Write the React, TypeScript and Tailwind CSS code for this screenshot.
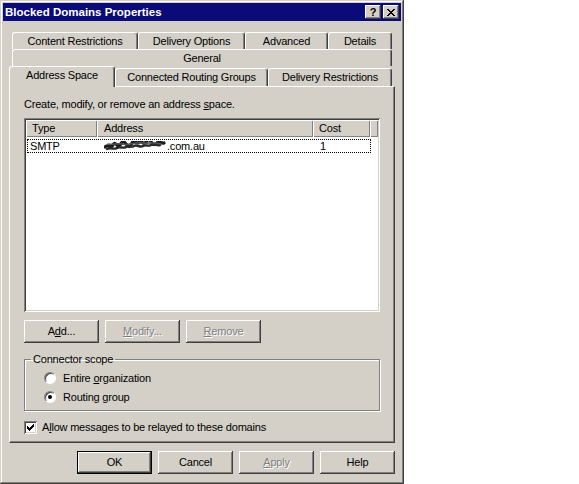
import React from 'react';

// Win2000-style "Blocked Domains Properties" dialog

const raised =
  'shadow-[inset_-1px_-1px_#404040,inset_1px_1px_#ffffff,inset_-2px_-2px_#808080,inset_2px_2px_#d4d0c8]';
const sunken =
  'shadow-[inset_1px_1px_#808080,inset_-1px_-1px_#ffffff,inset_2px_2px_#404040,inset_-2px_-2px_#d4d0c8]';
const disabledText = 'text-[#808080] [text-shadow:1px_1px_0_#ffffff]';

function Tab({ label, width, selected = false }: { label: string; width: string; selected?: boolean }) {
  return (
    <div
      className={`${width} ${
        selected ? 'h-[21px] relative z-10 pb-[3px]' : 'h-[18px] mb-[1px]'
      } flex items-center justify-center bg-[#d4d0c8] border-t border-l border-white border-r border-r-[#404040] rounded-t-[3px] shadow-[inset_-1px_0_#808080] whitespace-nowrap`}
    >
      {label}
    </div>
  );
}

function BackTab({ label, width }: { label: string; width: string }) {
  return (
    <div
      className={`${width} h-[17px] flex items-center justify-center border-t border-l border-white border-r border-r-[#404040] rounded-t-[3px] shadow-[inset_-1px_0_#808080] whitespace-nowrap`}
    >
      {label}
    </div>
  );
}

function Button({
  children,
  disabled = false,
  isDefault = false,
}: {
  children: React.ReactNode;
  disabled?: boolean;
  isDefault?: boolean;
}) {
  if (isDefault) {
    return (
      <div className="w-[75px] h-[23px] border border-black">
        <div className={`w-full h-full flex items-center justify-center ${raised}`}>{children}</div>
      </div>
    );
  }
  return (
    <div
      className={`w-[75px] h-[23px] flex items-center justify-center ${raised} ${disabled ? disabledText : ''}`}
    >
      {children}
    </div>
  );
}

function Radio({ checked, children }: { checked: boolean; children: React.ReactNode }) {
  return (
    <div className="flex items-center h-[14px] ml-[19px]">
      <div className="w-[12px] h-[12px] rounded-full bg-white border border-t-[#808080] border-l-[#808080] border-r-white border-b-white shadow-[inset_1px_1px_#404040] flex items-center justify-center">
        {checked && <div className="w-[4px] h-[4px] rounded-full bg-black" />}
      </div>
      <span className="ml-[7px]">{children}</span>
    </div>
  );
}

// the domain name is scribbled out in the original screenshot
function Scribble() {
  return (
    <svg width="63" height="11" viewBox="0 0 63 11" className="shrink-0">
      <path
        d="M1 6c3-4 5 3 8-2s4 4 7 0 3-5 6-1 4 3 6-1 5 2 7-1 4 4 7 0 4-2 6 1 4 1 6-1 3 2 6 1"
        fill="none"
        stroke="#1a1a1a"
        strokeWidth="3.2"
        strokeLinecap="round"
      />
      <path
        d="M3 8c4-2 7 1 10-1s6 1 9-1 5 1 8-1 6 2 9 0 5 1 8-1 5 1 9 0"
        fill="none"
        stroke="#2a2a2a"
        strokeWidth="2.4"
        strokeLinecap="round"
      />
      <path d="M4 3c5 1 9-1 14 0s9 0 14-1 8 1 13 0 8 0 12 1" fill="none" stroke="#555" strokeWidth="1.4" strokeLinecap="round" />
    </svg>
  );
}

export default function App() {
  return (
    <div className="w-[579px] h-[484px] bg-white text-black text-[11px] tracking-[-0.2px] leading-[13px] font-['Liberation_Sans',Arial,sans-serif]">
      <div className="w-[404px] h-[484px] bg-[#d4d0c8] p-[3px] shadow-[inset_-1px_-1px_#404040,inset_1px_1px_#d4d0c8,inset_-2px_-2px_#808080,inset_2px_2px_#ffffff]">
        {/* Title bar */}
        <div className="h-[18px] bg-[#0a0a78] flex items-center justify-between pl-[2px] pr-[2px]">
          <span className="text-white font-bold text-[11.5px] tracking-normal">Blocked Domains Properties</span>
          <div className="flex items-center gap-[2px]">
            <div className={`w-[16px] h-[14px] bg-[#d4d0c8] ${raised} flex items-center justify-center font-bold text-[11px] leading-none pt-[1px]`}>
              ?
            </div>
            <div className={`w-[16px] h-[14px] bg-[#d4d0c8] ${raised} flex items-center justify-center`}>
              <svg width="8" height="7" viewBox="0 0 8 7" shapeRendering="crispEdges">
                <path d="M0 0h2v1H0zM6 0h2v1H6zM1 1h2v1H1zM5 1h2v1H5zM2 2h4v1H2zM3 3h2v1H3zM2 4h4v1H2zM1 5h2v1H1zM5 5h2v1H5zM0 6h2v1H0zM6 6h2v1H6z" fill="#000" />
              </svg>
            </div>
          </div>
        </div>

        {/* Tabs */}
        <div className="ml-[6px] mt-[11px] w-[386px]">
          <div className="flex ml-[3px]">
            <BackTab label="Content Restrictions" width="w-[126px]" />
            <BackTab label="Delivery Options" width="w-[107px]" />
            <BackTab label="Advanced" width="w-[83px]" />
            <BackTab label="Details" width="w-[64px]" />
          </div>
          <div className="flex ml-[3px]">
            <BackTab label="General" width="w-[380px]" />
          </div>
          <div className="flex items-end h-[21px]">
            <Tab label="Address Space" width="w-[106px]" selected />
            <Tab label="Connected Routing Groups" width="w-[153px]" />
            <Tab label="Delivery Restrictions" width="w-[124px]" />
          </div>

          {/* Tab page */}
          <div className="-mt-[1px] h-[357px] border-t border-l border-white border-r border-b border-r-[#404040] border-b-[#404040] shadow-[inset_-1px_-1px_#808080] pl-[14px]">
            <div className="mt-[11px] h-[13px]">
              Create, modify, or remove an address <span className="underline">s</span>pace.
            </div>

            {/* List view */}
            <div className={`mt-[7px] w-[356px] h-[194px] bg-white p-[2px] ${sunken}`}>
              <div className="flex h-[17px] bg-[#d4d0c8] shadow-[inset_0_-1px_#404040]">
                <div className="w-[71px] pl-[6px] flex items-center shadow-[inset_1px_1px_#fff,inset_-1px_-1px_#808080]">Type</div>
                <div className="w-[216px] pl-[7px] flex items-center shadow-[inset_1px_1px_#fff,inset_-1px_-1px_#808080]">Address</div>
                <div className="w-[57px] pl-[6px] flex items-center shadow-[inset_1px_1px_#fff,inset_-1px_-1px_#808080]">Cost</div>
                <div className="flex-1 shadow-[inset_1px_1px_#fff,inset_-1px_-1px_#808080]" />
              </div>
              <div className="mt-[2px] ml-[1px] w-[344px] h-[14px] border border-dotted border-black flex items-center">
                <span className="w-[76px] pl-[2px]">SMTP</span>
                <span className="w-[216px] flex items-center">
                  <Scribble />
                  <span>.com.au</span>
                </span>
                <span>1</span>
              </div>
            </div>

            {/* List buttons */}
            <div className="mt-[8px] flex gap-[6px]">
              <Button>
                A<span className="underline">d</span>d...
              </Button>
              <Button disabled>
                <span className="underline">M</span>odify...
              </Button>
              <Button disabled>
                <span className="underline">R</span>emove
              </Button>
            </div>

            {/* Connector scope */}
            <fieldset className="mt-[10px] w-[356px] h-[58px] border border-[#808080] shadow-[1px_1px_0_#fff,inset_1px_1px_0_#fff]">
              <legend className="ml-[6px] px-[2px]">Connector scope</legend>
              <div className="mt-[5px] flex flex-col gap-[5px]">
                <Radio checked={false}>
                  Entire <span className="underline">o</span>rganization
                </Radio>
                <Radio checked>Routing group</Radio>
              </div>
            </fieldset>

            {/* Relay checkbox */}
            <div className="mt-[10px] flex items-center h-[13px]">
              <div className={`w-[13px] h-[13px] bg-white ${sunken} flex items-center justify-center`}>
                <svg width="7" height="7" viewBox="0 0 7 7" shapeRendering="crispEdges">
                  <path d="M6 0v1H5v1H4v1H3v1H2V3H1V2H0v3h1v1h1v1h1V6h1V5h1V4h1V3h1V0z" fill="#000" />
                </svg>
              </div>
              <span className="ml-[5px]">
                A<span className="underline">l</span>low messages to be relayed to these domains
              </span>
            </div>
          </div>
        </div>

        {/* Dialog buttons */}
        <div className="mt-[8px] ml-[74px] flex gap-[6px]">
          <Button isDefault>OK</Button>
          <Button>Cancel</Button>
          <Button disabled>
            <span className="underline">A</span>pply
          </Button>
          <Button>Help</Button>
        </div>
      </div>
    </div>
  );
}
